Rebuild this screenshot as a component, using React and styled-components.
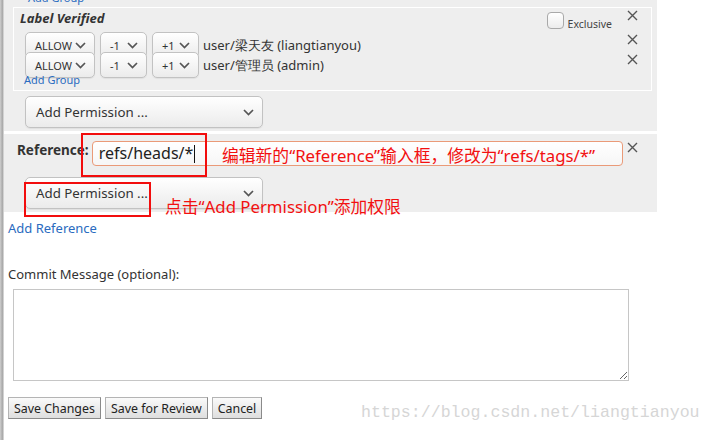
import styled, { createGlobalStyle } from "styled-components";

const GlobalStyle = createGlobalStyle`
  html, body { margin: 0; padding: 0; background: #fff; }
  body { font-family: "Noto Sans", "Open Sans", sans-serif; color: #333; }
`;

const Page = styled.div`
  position: relative;
  width: 713px;
  height: 440px;
  overflow: hidden;
  display: flex;
`;

const SideStrip = styled.div`
  width: 4px;
  flex: none;
  background: linear-gradient(to right, #cfcfcf, #a8a8a8 60%, #e4e4e4);
`;

const Main = styled.div`
  width: 653px;
  display: flex;
  flex-direction: column;
  align-items: flex-start;
`;

const Panel = styled.div`
  align-self: stretch;
  background: #eeeeee;
  margin-top: ${(p) => p.$top || 0}px;
  padding: ${(p) => p.$pad};
  display: flex;
  flex-direction: column;
  align-items: flex-start;
`;

const TopStub = styled.div`
  height: 7px;
  overflow: hidden;
  padding-left: 15px;
`;

const Link = styled.a`
  display: block;
  color: #2a6bc0;
  text-decoration: none;
  font-size: ${(p) => p.$size || 11}px;
  line-height: ${(p) => (p.$size || 11) + 3}px;
  margin: ${(p) => p.$margin || 0};
  cursor: pointer;
`;

const GroupBox = styled.div`
  align-self: stretch;
  border: 1px solid #fff;
  padding: 0 13px 3px 6px;
  display: flex;
  flex-direction: column;
`;

const Header = styled.div`
  display: flex;
  align-items: flex-start;
  height: 24px;
`;

const Title = styled.div`
  font-style: italic;
  font-weight: bold;
  font-size: 13px;
  line-height: 20px;
  color: #333;
  flex: 1;
`;

const Check = styled.span`
  width: 15px;
  height: 15px;
  margin-top: 4px;
  border: 1px solid #a9a9a9;
  border-radius: 4px;
  background: linear-gradient(#ffffff, #ececec);
`;

const CheckLabel = styled.span`
  font-size: 10.5px;
  line-height: 13px;
  margin: 10px 0 0 4px;
  color: #444;
`;

const Close = styled.span`
  display: inline-flex;
  width: 11px;
  height: 11px;
  margin: ${(p) => p.$margin || 0};
  flex: none;
`;

const Row = styled.div`
  display: flex;
  align-items: flex-start;
  height: 20px;
  margin-left: 5px;
`;

const SelectBox = styled.div`
  box-sizing: border-box;
  width: ${(p) => p.$w}px;
  height: ${(p) => p.$h || 26}px;
  margin: ${(p) => p.$margin || 0};
  flex: none;
  display: flex;
  align-items: center;
  justify-content: space-between;
  padding: 0 ${(p) => (p.$big ? 8 : 8)}px 0 ${(p) => (p.$big ? 10 : 9)}px;
  border: 1px solid #c2c2c2;
  border-radius: 5px;
  background: linear-gradient(#ffffff, #ebebeb);
  box-shadow: 0 1px 1px rgba(0, 0, 0, 0.06);
  font-size: ${(p) => (p.$big ? 13.3 : 11)}px;
  color: #333;
`;

const UserName = styled.span`
  font-size: 13px;
  line-height: 26px;
  color: #333;
  white-space: nowrap;
  flex: 1;
`;

const RefRow = styled.div`
  display: flex;
  align-items: flex-start;
  align-self: stretch;
`;

const RefLabel = styled.span`
  font-weight: bold;
  font-size: 13.5px;
  line-height: 20px;
  color: #333;
  width: 75px;
  margin-top: -1px;
`;

const RefInput = styled.div`
  box-sizing: border-box;
  width: 533px;
  height: 25px;
  padding: 0 6px;
  border: 1px solid #ea9a78;
  border-radius: 4px;
  background: linear-gradient(#ffffff, #f6f6f6);
  font-size: 16px;
  line-height: 23px;
  color: #222;
  display: flex;
  align-items: center;
`;

const Caret = styled.span`
  width: 1px;
  height: 18px;
  background: #111;
  margin-left: 1px;
`;

const Label = styled.div`
  font-size: 13px;
  line-height: 18px;
  color: #333;
  margin: 29px 0 0 4px;
`;

const TextArea = styled.textarea`
  box-sizing: border-box;
  width: 616px;
  height: 92px;
  margin: 6px 0 0 9px;
  border: 1px solid #c6c6c6;
  background: #fff;
  font-family: inherit;
`;

const Buttons = styled.div`
  display: flex;
  gap: 4px;
  margin: 16px 0 0 4px;
`;

const Button = styled.button`
  box-sizing: border-box;
  height: 22px;
  padding: 0 5px;
  border: 1px solid #b4b4b4;
  border-right-color: #8a8a8a;
  border-bottom-color: #8a8a8a;
  border-radius: 0;
  background: linear-gradient(#fafafa, #dedede);
  font-family: "Noto Sans", "Open Sans", sans-serif;
  font-size: 12.4px;
  color: #222;
`;

const RedBox = styled.div`
  position: absolute;
  left: ${(p) => p.$x}px;
  top: ${(p) => p.$y}px;
  width: ${(p) => p.$w}px;
  height: ${(p) => p.$h}px;
  border: 2px solid #f20d0d;
  box-sizing: border-box;
`;

const Note = styled.div`
  position: absolute;
  left: ${(p) => p.$x}px;
  top: ${(p) => p.$y}px;
  font-family: "Noto Sans", "Noto Sans CJK SC", sans-serif;
  font-size: 16.8px;
  line-height: 20px;
  color: #f21010;
  white-space: nowrap;
`;

const Watermark = styled.div`
  position: absolute;
  left: 361px;
  top: 403px;
  font-family: "Liberation Mono", monospace;
  font-size: 16.6px;
  color: #d6d6d6;
  white-space: nowrap;
`;

const Chevron = () => (
  <svg width="11" height="7" viewBox="0 0 11 7">
    <path d="M1 1 L5.5 5.5 L10 1" fill="none" stroke="#555" strokeWidth="1.7" />
  </svg>
);

const XIcon = ({ margin }) => (
  <Close $margin={margin}>
    <svg width="11" height="11" viewBox="0 0 11 11">
      <path d="M1 1 L10 10 M10 1 L1 10" stroke="#555" strokeWidth="1.4" />
    </svg>
  </Close>
);

const Select = ({ w, h, big, margin, children }) => (
  <SelectBox $w={w} $h={h} $big={big} $margin={margin}>
    <span>{children}</span>
    <Chevron />
  </SelectBox>
);

const rules = [
  { user: "user/梁天友 (liangtianyou)" },
  { user: "user/管理员 (admin)" },
];

export default function App() {
  return (
    <Page>
      <GlobalStyle />
      <SideStrip />
      <Main>
        <Panel $pad="0 5px 3px 9px">
          <TopStub>
            <Link $margin="-9px 0 0 0">Add Group</Link>
          </TopStub>
          <GroupBox>
            <Header>
              <Title>Label Verified</Title>
              <Check />
              <CheckLabel>Exclusive</CheckLabel>
              <XIcon margin="2px 0 0 15px" />
            </Header>
            {rules.map((r) => (
              <Row key={r.user}>
                <Select w={70} margin="0 5px 0 0">ALLOW</Select>
                <Select w={47} margin="0 5px 0 0">-1</Select>
                <Select w={47} margin="0 4px 0 0">+1</Select>
                <UserName>{r.user}</UserName>
                <XIcon margin="2px 0 0 0" />
              </Row>
            ))}
            <Link $margin="1px 0 0 4px">Add Group</Link>
          </GroupBox>
          <Select w={238} h={32} big margin="5px 0 0 12px">
            Add Permission ...
          </Select>
        </Panel>

        <Panel $top={3} $pad="7px 19px 3px 13px">
          <RefRow>
            <RefLabel>Reference:</RefLabel>
            <RefInput>
              refs/heads/*
              <Caret />
            </RefInput>
            <XIcon margin="1px 0 0 4px" />
          </RefRow>
          <Select w={238} h={32} big margin="11px 0 0 8px">
            Add Permission ...
          </Select>
        </Panel>

        <Link $size={13} $margin="8px 0 0 4px">Add Reference</Link>
        <Label>Commit Message (optional):</Label>
        <TextArea />
        <Buttons>
          <Button>Save Changes</Button>
          <Button>Save for Review</Button>
          <Button>Cancel</Button>
        </Buttons>
      </Main>

      <RedBox $x={81} $y={133} $w={126} $h={44} />
      <RedBox $x={24} $y={182} $w={127} $h={35} />
      <Note $x={222} $y={146}>编辑新的“Reference”输入框，修改为“refs/tags/*”</Note>
      <Note $x={165} $y={197}>点击“Add Permission”添加权限</Note>
      <Watermark>https://blog.csdn.net/liangtianyou</Watermark>
    </Page>
  );
}
